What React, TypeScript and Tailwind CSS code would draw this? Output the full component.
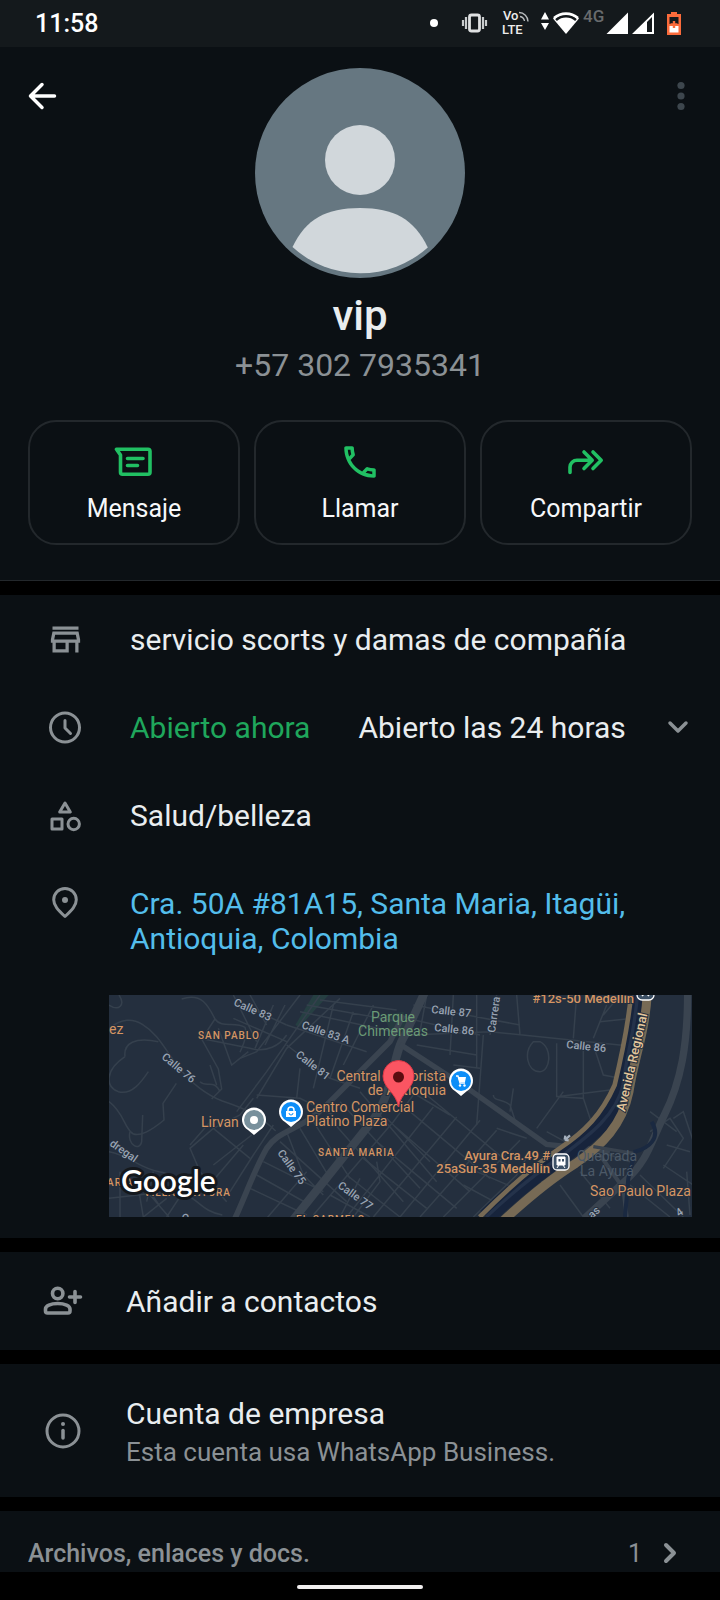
import type { ReactNode } from "react";
import { MdOutlineCall, MdOutlineStore } from "react-icons/md";

const StatusBar = () => (
  <div className="flex h-[47px] items-center justify-between bg-[#14191c] pl-[35px] pr-[37px] text-white">
    <span className="text-[25px] leading-[30px] font-medium">11:58</span>
    <svg width="254" height="47" viewBox="429 0 254 47" fill="#fff" aria-hidden="true">
      <circle cx="434" cy="23" r="4" />
      {/* vibrate */}
      <rect x="469.500" y="15" width="10" height="16" rx="2" fill="none" stroke="#dfe1e2" strokeWidth="2.8" />
      <path d="M466 17v12M463 20v6M483 17v12M486 20v6" stroke="#c9cccd" strokeWidth="2.200" />
      {/* VoLTE */}
      <text x="503" y="20" fontSize="13" fontWeight="500" fill="#ececec">Vo</text>
      <text x="502" y="34" fontSize="13" fontWeight="500" fill="#ececec">LTE</text>
      <path d="M519 12.500a9 9 0 0 1 9 9M520 16.500a5.500 5.500 0 0 1 4.500 4.500" fill="none" stroke="#b9bcbe" strokeWidth="1.400" />
      {/* wifi */}
      <path d="M545 12l4 7.500h-8zM545 30l-4-7h8z" />
      <path d="M566 34L553 18.500a19 19 0 0 1 26 0z" />
      <path d="M556 20a15 15 0 0 1 20 0" fill="none" stroke="#14191c" strokeWidth="2.600" />
      <path d="M554 18a18 18 0 0 1 24 0" fill="none" stroke="#fff" strokeWidth="2.400" />
      <text x="583" y="22" fontSize="17" fontWeight="500" fill="#686b6d">4G</text>
      {/* signal */}
      <path d="M628 12.500V34h-21.500zM654 12.500V34h-22z" />
      <path d="M647 22l5-5v15h-5z" fill="#14191c" />
      {/* battery */}
      <path d="M671 12h6v2h4v21h-14V14h4z" fill="#fb6b3b" />
      <path d="M669.500 17h9v7h-9z" fill="#14191c" />
      <path d="M669.500 26h9v6.500h-9z" />
      <path d="M674 21v7M670.500 24.500h7" stroke="#fb6b3b" strokeWidth="2.400" />
    </svg>
  </div>
);

const Avatar = () => (
  <svg className="size-[210px]" viewBox="0 0 210 210" role="img" aria-label="vip">
    <circle cx="105" cy="105" r="105" fill="#667781" />
    <circle cx="105" cy="92" r="35" fill="#d1d7db" />
    <path d="M37.500 179C51 151 71 140 105 140s54 11 67.800 39.500A101 101 0 0 1 37.500 179z" fill="#d1d7db" />
  </svg>
);

const MessageIcon = () => (
  <svg className="size-10" viewBox="0 0 40 40" fill="none" stroke="#21c063" strokeWidth="3.600" strokeLinecap="round" strokeLinejoin="round">
    <path d="M2.500 7.300h31.500a2 2 0 0 1 2 2v21a2 2 0 0 1-2 2H8.500a2 2 0 0 1-2-2V13z" />
    <path d="M13.500 16.500h15.500M13.500 23.500h10" />
  </svg>
);

const ShareIcon = () => (
  <svg className="size-10" viewBox="0 0 40 40" fill="none" stroke="#21c063" strokeWidth="3.600" strokeLinecap="round" strokeLinejoin="round">
    <path d="M4 30.500V25a7 7 0 0 1 7-6.700H26M18 10l8.200 8.300-8.200 8.200M27 10l8.200 8.300-8.200 8.200" />
  </svg>
);

const Glyph = ({ children }: { children: ReactNode }) => (
  <svg className="size-10 shrink-0" viewBox="0 0 40 40" fill="none" stroke="#8b9195" strokeWidth="3" strokeLinecap="round" strokeLinejoin="round" aria-hidden="true">
    {children}
  </svg>
);

const ClockIcon = () => (
  <Glyph>
    <circle cx="20" cy="19.500" r="14.500" />
    <path d="M20 12.500v7.500l5.500 5.500" />
  </Glyph>
);

const CategoryIcon = () => (
  <Glyph>
    <path d="M20 7l5.300 9h-10.600z" />
    <path d="M7 23h10v10H7z" />
    <circle cx="28.700" cy="28" r="5.700" />
  </Glyph>
);

const PinIcon = () => (
  <Glyph>
    <path d="M20 32.500C13 26 8.700 21.500 8.700 15.700a11.300 11.300 0 0 1 22.600 0C31.300 21.500 27 26 20 32.500z" />
    <circle cx="20" cy="16" r="3" fill="#8b9195" stroke="none" />
  </Glyph>
);

const AddPersonIcon = () => (
  <Glyph>
    <g strokeWidth="3.600">
      <circle cx="14.700" cy="12.500" r="5.200" />
      <path d="M2.500 30v-2c0-3 5-5.500 12.200-5.500S27 25 27 28v2a2 2 0 0 1-2 2H4.500a2 2 0 0 1-2-2z" />
      <path d="M32 10.500v11M26.500 16h11" />
    </g>
  </Glyph>
);

const InfoIcon = () => (
  <Glyph>
    <circle cx="20" cy="19" r="16" />
    <path d="M20 18.500v7.500" strokeWidth="3.500" />
    <circle cx="20" cy="12" r="2" fill="#8b9195" stroke="none" />
  </Glyph>
);

const actions = [
  { label: "Mensaje", icon: <MessageIcon /> },
  { label: "Llamar", icon: <MdOutlineCall className="size-[42px] text-[#21c063]" /> },
  { label: "Compartir", icon: <ShareIcon /> },
];

const orangeLabels = [
  { text: "ez", x: 0, y: 39, size: 14 },
  { text: "Central Mayorista", x: 337, y: 86, size: 14, anchor: "end" as const },
  { text: "de Antioquia", x: 337, y: 100, size: 14, anchor: "end" as const },
  { text: "Centro Comercial", x: 197, y: 117, size: 14 },
  { text: "Platino Plaza", x: 197, y: 131, size: 14 },
  { text: "Lirvan", x: 92, y: 132, size: 14 },
  { text: "Ayura Cra.49 #", x: 441, y: 165, size: 13, anchor: "end" as const, bold: true },
  { text: "25aSur-35 Medellin", x: 441, y: 178, size: 13, anchor: "end" as const, bold: true },
  { text: "#12s-50 Medellin", x: 525, y: 8, size: 13, anchor: "end" as const, bold: true },
  { text: "Sao Paulo Plaza", x: 481, y: 201, size: 14 },
];

const districts = [
  { text: "SAN PABLO", x: 89, y: 44 },
  { text: "SANTA MARIA", x: 209, y: 161 },
  { text: "VILLA VENTURA", x: 35, y: 201 },
  { text: "ARIA", x: -2, y: 191 },
  { text: "EL CARMELO", x: 187, y: 228 },
];

const streets = [
  { text: "Calle 83", x: 124, y: 10, angle: 24 },
  { text: "Calle 83 A", x: 192, y: 33, angle: 19 },
  { text: "Calle 81", x: 186, y: 61, angle: 38 },
  { text: "Calle 76", x: 52, y: 63, angle: 40 },
  { text: "Calle 75", x: 168, y: 158, angle: 54 },
  { text: "Calle 77", x: 228, y: 192, angle: 36 },
  { text: "dregal", x: 0, y: 150, angle: 35 },
  { text: "Calle 87", x: 322, y: 18, angle: 6 },
  { text: "Calle 86", x: 325, y: 36, angle: 6 },
  { text: "Calle 86", x: 457, y: 53, angle: 6 },
  { text: "Carrera", x: 386, y: 38, angle: -82 },
  { text: "as", x: 483, y: 224, angle: -42 },
  { text: "4", x: 570, y: 222, angle: -35 },
  { text: "C", x: 72, y: 226, angle: 10 },
];

const Roads = () => (
  <svg width="583" height="222" viewBox="27 30 1749 666" fill="none">
    <path d="M640 30h46l-88 96-12-6z" fill="#263f42" />
    <path d="M850 90l60-10 20 60-50 20z" fill="#263b40" />

    {/* minor streets */}
    <g stroke="#35404d" strokeWidth="4.500">
      <path d="M27 130c40-30 70-30 100-12 50 30 70 80 110 130 40 50 80 80 130 100 60 20 110 40 160 90" />
      <path d="M27 60c30 20 50 0 30-30M75 215c-5-40 30-60 100-45M75 215c-60 40-60 90-20 105 40 12 70-30 90-60M27 350c40 30 45 70 65 90 20 25 70-10 100-35l-3-50 40-60" />
      <path d="M90 440c-10 40 30 60 35 30l3-80M27 500c60 10 90 50 150 60 60 8 60 50 100 80 30 20 40 40 90 50M27 600h110l40 60M27 640l120-14 60 70M60 560v136M110 580l20 116M160 560l-20 90M200 640l-70 56M250 620l-50 76" />
      <path d="M245 42c60-20 80 20 100 60 20 30 60 5 90 25 10 30-10 60-15 75M345 102l-40 60 50 90 10 60-30 30M300 290c20 20 40-10 60 30M330 240l20 60M355 130l40 110 50-40M300 160l150 30c50 15 90-10 110-40" />
      <path d="M400 30l70 140M450 30l50 90M430 60l130 60M400 100l160 70M520 60l-55 130M555 60l-60 120M600 30L470 200l-50 20M660 30L500 260l-90 120M720 40L560 190 470 340" />
      <path d="M560 120l240 80M600 80l280 60M620 60l280 50M660 45l230 30M700 60l-60 250M760 80l-70 200M820 60l-90 180M560 180l130 100 90 30M470 330l130 10 100 50M600 250l-10 90" />
      <path d="M460 340l-40 50-80 40-70 60 30 70 80 90M340 430l110 90M430 480l-110 130M455 450L340 540M270 480l70-80M520 420l-60 90-70 110" />
      <path d="M560 440l50 130 60 60M600 430l90 150M640 410l110 170M680 390l230 260M720 350l240 260M780 320l230 270M470 570l160 90M450 610l170 80M490 530l180 90M540 470l200 180" />
      <path d="M620 560l-120 140M690 560l-100 130M780 580l-60 116M830 530l10 60-80 106M640 690l240-280 60-80M740 696l260-330M820 696l250-300M900 696l240-290M960 696l230-260M1030 696l230-230" />
      <path d="M690 630l120 66M740 570l160 126M790 520l190 150M830 470l240 200M880 420l230 200M930 380l240 200M980 330l230 190M900 300l150 90M860 400l130 130" />
      <path d="M940 60l320 60M980 30l-20 110M1060 30l-10 180M1130 30v220M1190 30l-20 120M1250 30l10 120M930 150l240-10 440 45M1150 150l-20 270M920 100l220 50M1060 240l80 10M950 180l180 30" />
      <path d="M1300 170c-30 30-20 90 20 90 30 0 40-70 0-90zM1370 175v160l80 5v-155M1180 330c0 20 30 10 50 30l20 60M1240 310l-10 70M1370 335l160-20M1310 430l80-110M1450 340l30 90M1340 440l110 60M1190 430l90 30" />
      <path d="M1430 30l-10 130M1520 60l-40 100M1500 110l100-10M1560 30l-50 60M1480 180l30 90 50 10M1650 440l60-40 40 60-60 90M1720 400l30-20 40 120M1690 540l90 60M1650 380l80 60M1700 480l70 20M1760 560l10 130M1590 600l120 96M1620 570l130 126" />
      <path d="M1290 500l-40 70-130 126M1180 520l170 80M1130 560l140 60M1090 600l130 70M1380 600l70 96M1440 560l90 110M1500 500l90 30" />
    </g>

    {/* avenues */}
    <g stroke="#3a4450">
      <path d="M400 710c30-60 60-150 100-220 40-60 100-50 180-130l190-190 40-80" strokeWidth="17" />
      <path d="M575 710c80-100 160-200 240-300 70-90 60-200 100-260l60-130" strokeWidth="25" />
      <path d="M900 178l200 130 240 170 190 20" strokeWidth="16" />
      <path d="M1763 20c0 160-20 270-70 370-40 80-50 140-120 200l-120 110" strokeWidth="22" />
      <path d="M1500 510l70 100 10 86" strokeWidth="12" />
    </g>

    {/* highway and river */}
    <path d="M1613 20c-8 120-34 190-44 280-20 90-100 150-180 210-90 60-160 120-230 186" stroke="#17243c" strokeWidth="52" />
    <path d="M1613 20c-8 120-34 190-44 280-20 90-100 150-180 210-90 60-160 120-230 186" stroke="#24324a" strokeWidth="10" />
    <path d="M1655 410c30 50-10 80-50 90l-20 80-10 116" stroke="#1a2941" strokeWidth="12" />
    <path d="M1594 20c-9 100-26 180-50 280-40 90-90 140-165 190-90 60-165 130-240 206" stroke="#776a55" strokeWidth="14" />
    <path d="M1642 20c-5 120-40 200-55 300-20 100-80 160-160 215-80 50-150 110-215 170" stroke="#776a55" strokeWidth="27" />
    <path d="M1480 485l120 20" stroke="#38424e" strokeWidth="10" />
    <path d="M1395 465l15-14m-16 13l2-12m-2 12l12 2" stroke="#a5b0bd" strokeWidth="7" />
  </svg>
);

const PlacePin = ({ x, y, color, children }: { x: number; y: number; color: string; children: ReactNode }) => (
  <g transform={`translate(${x} ${y})`}>
    <path d="M0 15l-6-5A12 12 0 1 1 6 10z" fill="#fff" />
    <circle r="10" fill={color} />
    {children}
  </g>
);

const StreetMap = () => (
  <svg className="block h-[222px] w-full bg-[#242f3e]" viewBox="0 0 583 222" preserveAspectRatio="xMidYMid slice" role="img" aria-label="Mapa">
    <Roads />

    {streets.map((s) => (
      <text key={`${s.text}-${s.x}`} transform={`translate(${s.x} ${s.y}) rotate(${s.angle})`} fontSize="11" fontWeight="500" fill="#98a3b2" stroke="#242f3e" strokeWidth="2" paintOrder="stroke">
        {s.text}
      </text>
    ))}
    <text transform="translate(516 117) rotate(-77)" fontSize="13" fontWeight="500" fill="#e3c69b" stroke="#242f3e" strokeWidth="2" paintOrder="stroke">
      Avenida Regional
    </text>

    <g fill="#6b9a76" fontSize="14" textAnchor="middle">
      <text x="284" y="27">Parque</text>
      <text x="284" y="41">Chimeneas</text>
    </g>
    <g fill="#4c5967" fontSize="14" textAnchor="middle">
      <text x="498" y="166">Quebrada</text>
      <text x="498" y="181">La Ayurá</text>
    </g>

    <g fill="#d59563" stroke="#242f3e" strokeWidth="2">
      {districts.map((d) => (
        <text key={d.text} x={d.x} y={d.y} fontSize="10" fontWeight="500" paintOrder="stroke" className="tracking-widest">
          {d.text}
        </text>
      ))}
      {orangeLabels.map((l) => (
        <text key={l.text} x={l.x} y={l.y} fontSize={l.size} textAnchor={l.anchor} fontWeight={l.bold ? 500 : 400} paintOrder="stroke">
          {l.text}
        </text>
      ))}
    </g>

    <PlacePin x={145} y={125} color="#78909c">
      <circle r="4" fill="#fff" />
    </PlacePin>
    <PlacePin x={182} y={117} color="#0d8ef8">
      <path d="M-5-1H5L5 5H-5z" fill="#fff" />
      <path d="M-3-1v-1a3 3 0 0 1 6 0v1" fill="none" stroke="#fff" strokeWidth="1.500" />
      <path d="M-2 1a2 2 0 0 0 4 0" fill="none" stroke="#0d8ef8" />
    </PlacePin>
    <PlacePin x={352} y={86} color="#0d8ef8">
      <path d="M-5-5h2l2 7h5" fill="none" stroke="#fff" strokeWidth="1.300" />
      <path d="M-3-4h8L4 1h-5.500z" fill="#fff" />
      <circle cx="-1" cy="4.500" r="1.200" fill="#fff" />
      <circle cx="3.500" cy="4.500" r="1.200" fill="#fff" />
    </PlacePin>

    {/* stations */}
    <rect x="444" y="159" width="16" height="16" rx="4" fill="#3d5166" stroke="#fff" strokeWidth="1.300" />
    <path d="M448 162h8v8h-8zM448 173l2-3m6 3l-2-3" fill="#fff" stroke="#fff" />
    <path d="M449.500 164h2v2.500h-2zM453 164h2v2.500h-2z" fill="#3d5166" />
    <rect x="528" y="-12" width="17" height="17" rx="5" fill="#3d5166" stroke="#fff" strokeWidth="1.300" />
    <path d="M533 1l2-2h3l2 2" fill="none" stroke="#fff" strokeWidth="1.500" />

    {/* selected place */}
    <path d="M289.500 112c-2-14-15.500-19-15.500-31a15.500 15.500 0 0 1 31 0c0 12-13.500 17-15.500 31z" fill="#fb5562" stroke="#d93745" />
    <circle cx="289.500" cy="82" r="5.500" fill="#5b0c10" />

    <text x="12" y="197" fontFamily="Lato, sans-serif" fontSize="30" fontWeight="600" fill="#fff" stroke="#14181d" strokeWidth="6" strokeLinejoin="round" paintOrder="stroke">
      Google
    </text>
  </svg>
);

const InfoRow = ({ icon, children }: { icon: ReactNode; children: ReactNode }) => (
  <div className="flex items-start gap-[45px] pl-[45px] pr-[22px]">
    <div className="flex h-[35px] w-10 shrink-0 items-center justify-center">{icon}</div>
    <div className="min-w-0 flex-1">{children}</div>
  </div>
);

export default function App() {
  return (
    <div className="flex min-h-screen flex-col bg-black font-['Roboto',sans-serif] text-[30px] leading-[35px] text-[#e9edef]">
      <StatusBar />

      <main className="flex flex-col gap-[14px]">
        <header className="border-b border-[#23282c] bg-[#0b1014] pt-[21px] pb-[35px]">
          <div className="flex items-start justify-between px-5">
            <button type="button" aria-label="Atrás" className="mt-1.5">
              <svg width="44" height="44" viewBox="0 0 44 44" fill="none" stroke="#fff" strokeWidth="3.500" strokeLinecap="round" strokeLinejoin="round">
                <path d="M34.500 22h-24M22 10.500L10.500 22 22 33.500" />
              </svg>
            </button>
            <Avatar />
            <button type="button" aria-label="Más opciones" className="mt-1.5">
              <svg width="44" height="44" viewBox="0 0 44 44" fill="#3d464d">
                <circle cx="25" cy="11.500" r="3.600" />
                <circle cx="25" cy="22" r="3.600" />
                <circle cx="25" cy="32.500" r="3.600" />
              </svg>
            </button>
          </div>

          <h1 className="mt-[14px] text-center text-[42px] leading-[48px] font-medium">vip</h1>
          <p className="mt-1.5 text-center text-[32px] leading-[38px] text-[#8b9195]">+57 302 7935341</p>

          <div className="mt-9 grid grid-cols-3 gap-[14px] px-7">
            {actions.map((action) => (
              <button
                key={action.label}
                type="button"
                className="flex flex-col items-center gap-3 rounded-[28px] border-2 border-[#23282c] pt-5 pb-[19px] text-[25px] leading-[30px] text-[#f7f8fa]"
              >
                <span className="flex h-10 items-center">{action.icon}</span>
                {action.label}
              </button>
            ))}
          </div>
        </header>

        <section className="bg-[#0b1014] pt-[27px] pb-[21px]">
          <div className="flex flex-col gap-[53px]">
            <InfoRow icon={<MdOutlineStore className="size-[39px] shrink-0 text-[#8b9195]" />}>
              <p>servicio scorts y damas de compañía</p>
            </InfoRow>
            <InfoRow icon={<ClockIcon />}>
              <button type="button" className="flex w-full items-center text-left">
                <span className="mr-12 text-[#1fa75c]">Abierto ahora</span>
                <span className="flex-1">Abierto las 24 horas</span>
                <svg width="40" height="35" viewBox="0 0 40 35" fill="none" stroke="#8b9195" strokeWidth="3.500" strokeLinecap="round" strokeLinejoin="round">
                  <path d="M12 13l8 8 8-8" />
                </svg>
              </button>
            </InfoRow>
            <InfoRow icon={<CategoryIcon />}>
              <p>Salud/belleza</p>
            </InfoRow>
            <InfoRow icon={<PinIcon />}>
              <a href="#mapa" className="block text-[#53bdeb]">
                Cra. 50A #81A15, Santa Maria, Itagüi, Antioquia, Colombia
              </a>
            </InfoRow>
          </div>
          <div id="mapa" className="mt-[39px] mr-7 ml-[109px]">
            <StreetMap />
          </div>
        </section>

        <button type="button" className="flex items-center gap-[43px] bg-[#0b1014] py-[29px] pl-[43px] text-left">
          <AddPersonIcon />
          <span>Añadir a contactos</span>
        </button>

        <section className="flex items-center gap-[43px] bg-[#0b1014] pt-8 pb-[30px] pl-[43px]">
          <InfoIcon />
          <div className="flex flex-col gap-1.5">
            <h2>Cuenta de empresa</h2>
            <p className="text-[26px] leading-[30px] text-[#8b9195]">Esta cuenta usa WhatsApp Business.</p>
          </div>
        </section>

        <button type="button" className="flex items-center bg-[#0b1014] pt-7 pr-[30px] pb-[3px] pl-7 text-left text-[25px] leading-[30px] text-[#8b9195]">
          <span className="flex-1 font-medium">Archivos, enlaces y docs.</span>
          <span>1</span>
          <svg className="ml-2" width="40" height="30" viewBox="0 0 40 30" fill="none" stroke="#8b9195" strokeWidth="4" strokeLinecap="round" strokeLinejoin="round">
            <path d="M16 6l8 8-8 8" />
          </svg>
        </button>
      </main>

      <footer className="flex h-7 items-center justify-center pt-0.5">
        <div className="h-1 w-[126px] rounded-full bg-[#f1eff0]" />
      </footer>
    </div>
  );
}
